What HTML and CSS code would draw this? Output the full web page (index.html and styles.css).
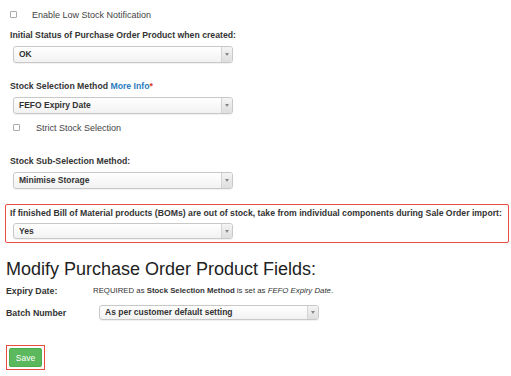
FILE: index.html
```html
<!DOCTYPE html>
<html lang="en">
<head>
  <meta charset="UTF-8" />
  <title>Purchase Order Settings</title>
  <link rel="stylesheet" href="styles.css">
</head>
<body>

  <div class="check-row first">
    <span class="box"></span>
    <span>Enable Low Stock Notification</span>
  </div>

  <div class="field status">
    <label class="label">Initial Status of Purchase Order Product when created:</label>
    <div class="select"><span class="value">OK</span><span class="arrow"></span></div>
  </div>

  <div class="field spaced">
    <label class="label">Stock Selection Method <a href="#">More Info</a><span class="req">*</span></label>
    <div class="select"><span class="value">FEFO Expiry Date</span><span class="arrow"></span></div>
  </div>

  <div class="check-row strict">
    <span class="box"></span>
    <span>Strict Stock Selection</span>
  </div>

  <div class="field sub">
    <label class="label">Stock Sub-Selection Method:</label>
    <div class="select"><span class="value">Minimise Storage</span><span class="arrow"></span></div>
  </div>

  <div class="field highlight">
    <label class="label">If finished Bill of Material products (BOMs) are out of stock, take from individual components during Sale Order import:</label>
    <div class="select"><span class="value">Yes</span><span class="arrow"></span></div>
  </div>

  <h2>Modify Purchase Order Product Fields:</h2>

  <div class="row">
    <span class="row-label">Expiry Date:</span>
    <span class="row-text">REQUIRED as <strong>Stock Selection Method</strong> is set as <em>FEFO Expiry Date</em>.</span>
  </div>

  <div class="row batch">
    <span class="row-label">Batch Number</span>
    <div class="select"><span class="value">As per customer default setting</span><span class="arrow"></span></div>
  </div>

  <div class="save-wrap">
    <button class="save">Save</button>
  </div>

</body>
</html>
```

FILE: styles.css
```css
body {
  font-family: "Liberation Sans", Arial, sans-serif;
  margin: 0;
  padding: 0 6px;
  color: #333;
  background-color: #fff;
  font-size: 9px;
}

.check-row {
  display: flex;
  align-items: center;
  height: 11px;
  font-size: 9px;
  color: #444;
}

.check-row.first {
  margin-top: 9px;
  padding-left: 4px;
  gap: 15px;
}

.check-row.strict {
  margin-top: 8px;
  padding-left: 7px;
  gap: 16px;
}

.box {
  width: 5px;
  height: 5px;
  border: 1px solid #aaa;
  border-radius: 1px;
  background-color: #fff;
}

.field {
  padding-left: 4px;
}

.field.status {
  margin-top: 10px;
}

.field.spaced {
  margin-top: 18px;
}

.field.sub {
  margin-top: 23px;
}

.label {
  display: block;
  font-weight: bold;
  font-size: 8.7px;
  line-height: 10px;
  color: #333;
  margin-bottom: 6px;
}

.label a {
  color: #2b7bbf;
  text-decoration: none;
}

.req {
  color: #d9302c;
}

.select {
  display: flex;
  width: 218px;
  height: 15px;
  margin-left: 3px;
  border: 1px solid #c8c8c8;
  border-radius: 3px;
  background: linear-gradient(#fff, #f2f2f2);
  box-shadow: 0 1px 1px rgba(0,0,0,0.06);
}

.select .value {
  flex: 1;
  padding-left: 5px;
  font-weight: bold;
  font-size: 8.5px;
  line-height: 15px;
  color: #333;
}

.select .arrow {
  width: 10px;
  border-left: 1px solid #d4d4d4;
  background: linear-gradient(#f4f4f4, #dedede);
  border-radius: 0 3px 3px 0;
  position: relative;
}

.select .arrow::after {
  content: "";
  position: absolute;
  left: 3px;
  top: 6px;
  border-left: 2px solid transparent;
  border-right: 2px solid transparent;
  border-top: 3px solid #888;
}

.field.highlight {
  margin: 15px -4px 0 -1px;
  padding: 3px 4px 3px 4px;
  border: 1.5px solid #e84c3d;
  border-radius: 2px;
}

.field.highlight .label {
  margin-bottom: 5px;
  white-space: nowrap;
}

.field.highlight .select {
  height: 14px;
}

.field.highlight .select .value {
  line-height: 14px;
}

h2 {
  font-size: 18px;
  line-height: 21px;
  font-weight: normal;
  color: #222;
  margin: 16px 0 5px 0;
}

.row {
  display: flex;
  align-items: center;
  height: 11px;
}

.row-label {
  width: 87px;
  font-weight: bold;
  font-size: 8.8px;
}

.row-text {
  font-size: 7.8px;
}

.row.batch {
  margin-top: 9px;
  height: 15px;
}

.row.batch .row-label {
  width: 90px;
}

.row.batch .select {
  height: 13px;
}

.row.batch .select .value {
  line-height: 13px;
}

.row.batch .select .arrow::after {
  top: 5px;
}

.save-wrap {
  display: inline-block;
  margin-top: 25px;
  padding: 2px 2px;
  border: 1.5px solid #e84c3d;
}

.save {
  display: block;
  width: 33px;
  height: 19px;
  background-color: #5cb85c;
  color: #fff;
  border: 1px solid #4cae4c;
  border-radius: 2px;
  font-family: inherit;
  font-size: 8.5px;
  padding: 0;
}
```
